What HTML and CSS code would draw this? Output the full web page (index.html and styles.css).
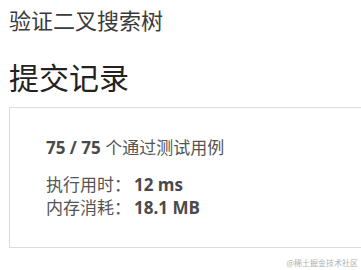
FILE: index.html
```html
<!DOCTYPE html>
<html lang="zh-CN">
<head>
<meta charset="utf-8">
<link rel="stylesheet" href="styles.css">
</head>
<body>
<div class="page">
  <div class="title">验证二叉搜索树</div>
  <h2 class="heading">提交记录</h2>
  <div class="result">
    <div class="passed"><b class="num">75 / 75</b> 个通过测试用例</div>
    <div class="stats">
      <div class="stat">执行用时：<b class="num value">12 ms</b></div>
      <div class="stat">内存消耗：<b class="num value">18.1 MB</b></div>
    </div>
  </div>
  <div class="footer"><span class="mark">@稀土掘金技术社区</span></div>
</div>
</body>
</html>
```
FILE: styles.css
```css
html, body {
  margin: 0;
  padding: 0;
  background: #fff;
  overflow: hidden;
}
body {
  font-family: "Open Sans", "Noto Sans CJK SC", sans-serif;
  color: #555;
}
.page {
  width: 361px;
  height: 270px;
  padding: 4px 0 0 9px;
  box-sizing: border-box;
  overflow: hidden;
}
.title {
  font-size: 22px;
  line-height: 30px;
  color: #3a3a3a;
  font-family: "Noto Sans CJK SC", sans-serif;
}
.heading {
  margin: 22px 0 0 0;
  font-size: 30px;
  line-height: 40px;
  font-weight: normal;
  color: #222;
  font-family: "Noto Sans CJK SC", sans-serif;
}
.result {
  margin-top: 11px;
  width: 353px;
  border: 1px solid #dcdcdc;
  border-right: none;
  padding: 28px 0 28px 36px;
  box-sizing: border-box;
}
.passed {
  font-size: 17px;
  line-height: 24px;
  color: #555;
}
.num {
  font-family: "Open Sans", sans-serif;
  font-weight: bold;
  color: #4a4a4a;
}
.value {
  margin-left: 3px;
}
.stats {
  margin-top: 13px;
}
.stat {
  font-size: 17px;
  line-height: 23px;
  color: #555;
}
.footer {
  display: flex;
  justify-content: flex-end;
  padding-right: 3px;
  margin-top: 10px;
}
.mark {
  font-size: 8px;
  line-height: 10px;
  color: #b0b0b0;
  font-family: "Noto Sans CJK SC", sans-serif;
}
```
